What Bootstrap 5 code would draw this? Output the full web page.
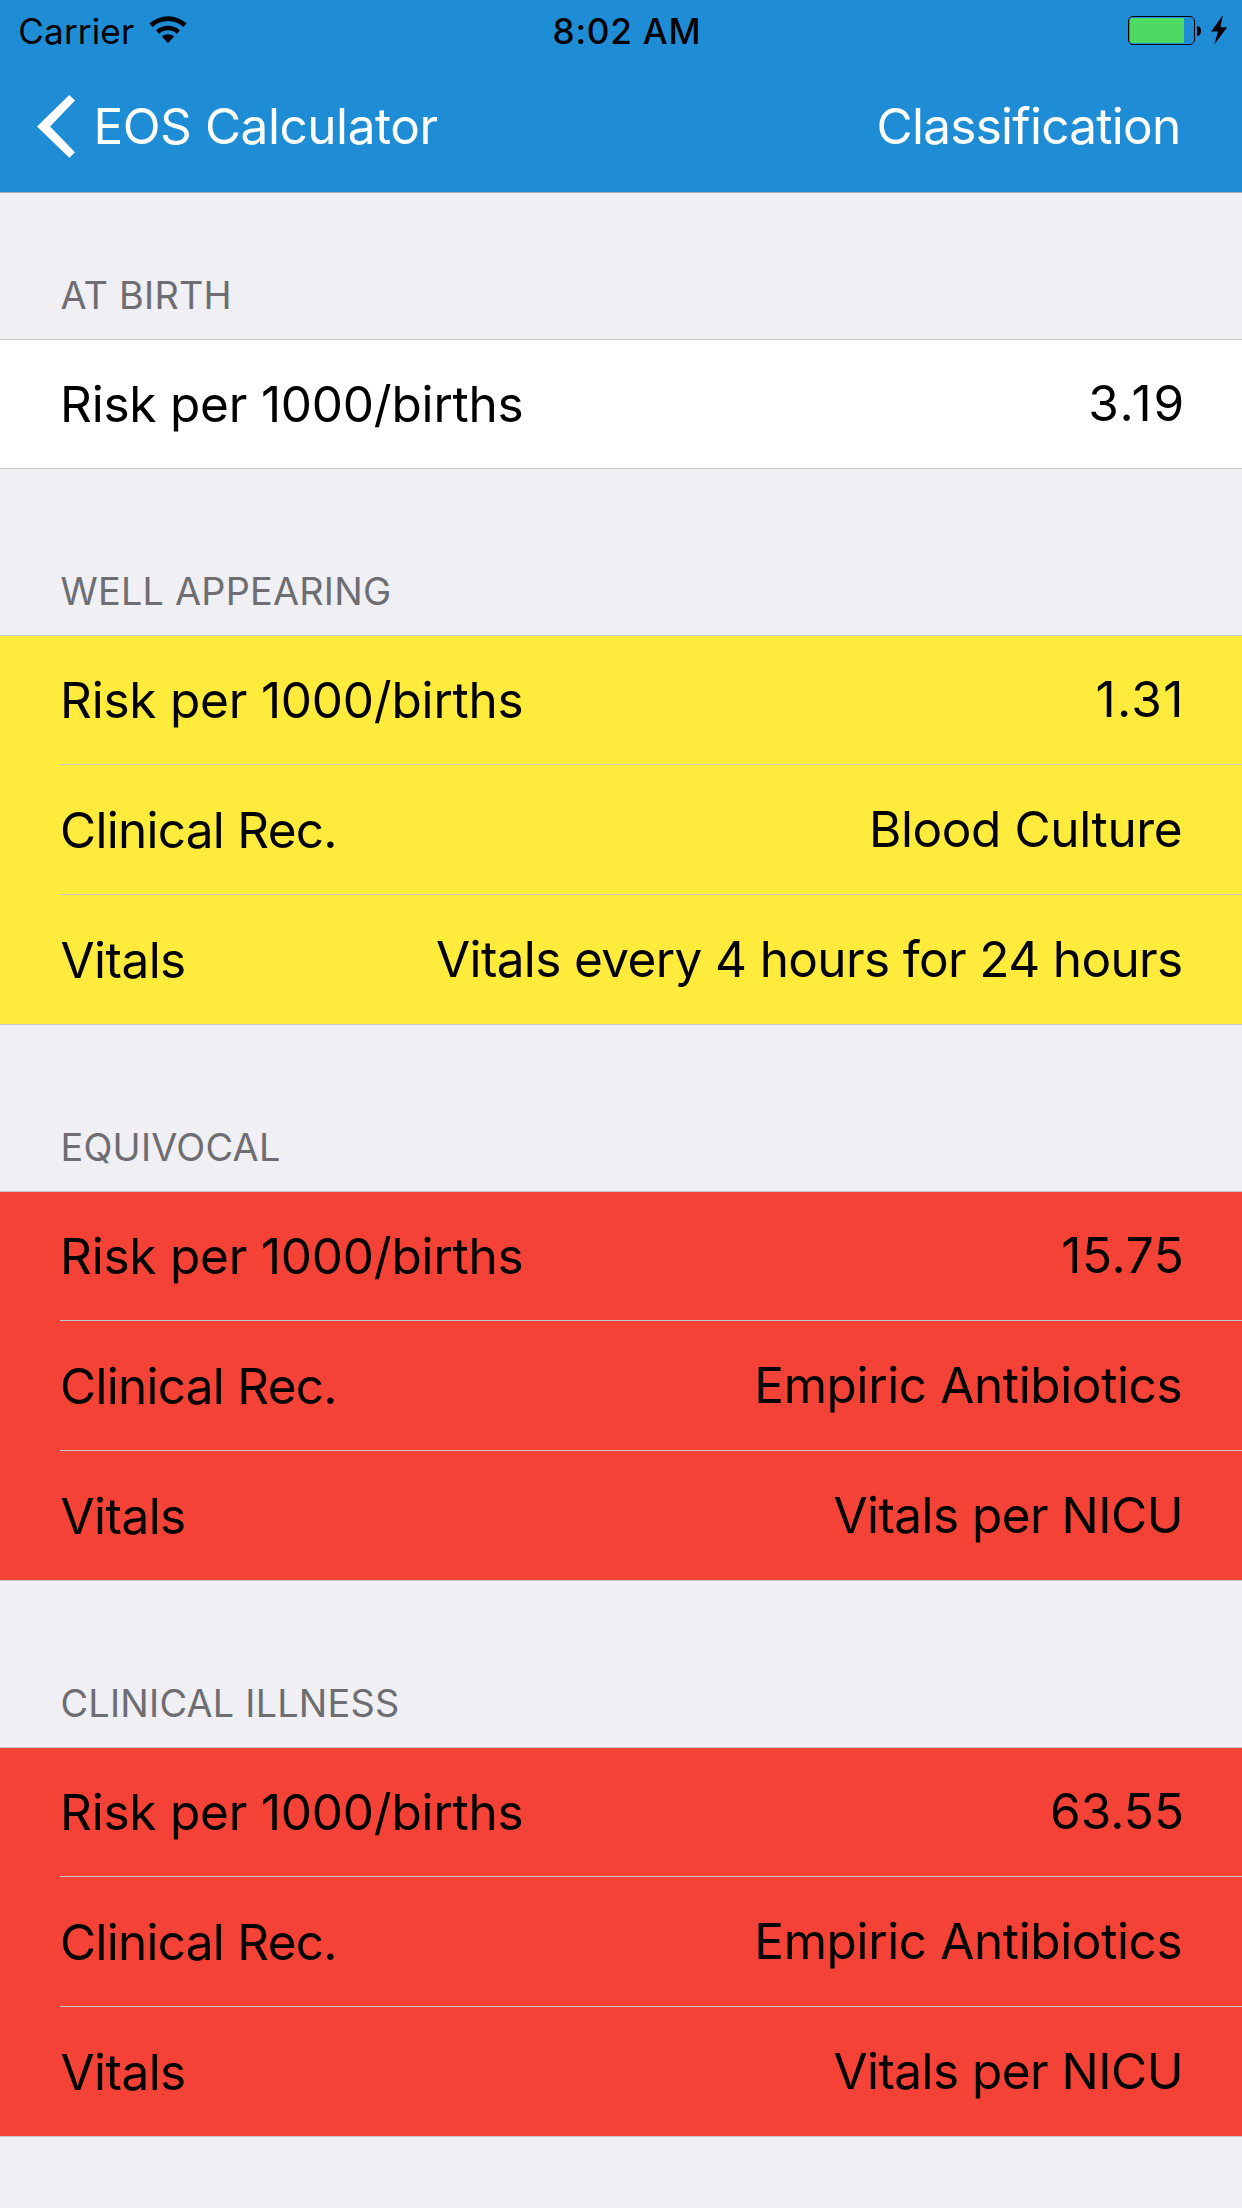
<!DOCTYPE html>
<html lang="en">
<head>
<meta charset="utf-8">
<meta name="viewport" content="width=device-width, initial-scale=1">
<title>EOS Calculator - Classification</title>
<link href="https://cdn.jsdelivr.net/npm/bootstrap@5.3.0/dist/css/bootstrap.min.css" rel="stylesheet">
<style>
  body { background: #efeff4; color: #000; font-family: Inter, "Liberation Sans", sans-serif; font-size: 49.5px; line-height: 128px; overflow: hidden; }
  .app-top { background: #1f8dd6; border-bottom: 1px solid #a9a9ae; height: 193px; }
  .status { height: 60px; font-size: 35.2px; line-height: 62px; }
  .status .side { flex: 1 1 0; }
  .carrier { padding-left: 18.3px; letter-spacing: .1px; }
  .clock { font-weight: 500; letter-spacing: .74px; padding-left: 12px; }
  .wifi { margin: 15px 0 0 14px; }
  .batt { margin: 14px 13px 0 0; }
  .titles { height: 132px; line-height: 132px; padding: 0 61.5px 0 36px; }
  .titles a { letter-spacing: -.45px; }
  .titles .page { letter-spacing: -.73px; }
  .chev { margin-right: 16.4px; }
  .group-title { height: 166px; padding: 0 0 20px 60.5px; font-size: 37.8px; line-height: 48px; letter-spacing: .23px; color: #6d6d72; }
  .group-title.first { height: 146px; }
  .group-rows { border: solid #c8c7cc; border-width: 1px 0; padding-left: 60px; }
  .entry { height: 130px; border-top: 1px solid #c8c7cc; padding-right: 58px; white-space: nowrap; }
  .entry:first-child { height: 128px; border-top: 0; }
  .entry dd { line-height: 126px; padding-bottom: 2px; }
  .entry dt { font-weight: 400; }
  .bg-well { background: #ffeb3b; }
  .bg-alert { background: #f44336; }
  .t-risk { letter-spacing: -.21px; }
  .t-rec { letter-spacing: -.73px; }
  .t-vit { letter-spacing: -.55px; padding-left: .5px; }
  .v-tight { letter-spacing: -.38px; padding-right: 1.8px; }
  .v-hours { letter-spacing: -.63px; padding-right: 1.4px; }
  .v-nicu { letter-spacing: -.54px; padding-right: 1px; }
  .v-319 { letter-spacing: 1.94px; margin-right: -2.2px; }
  .v-131 { letter-spacing: 1.39px; margin-right: -.8px; }
  .v-1575 { letter-spacing: .65px; margin-right: -.6px; }
</style>
</head>
<body>
<header class="app-top">
  <div class="status d-flex align-items-start">
    <div class="side d-flex align-items-start">
      <span class="carrier">Carrier</span>
      <svg class="wifi" width="40" height="30" viewBox="0 0 40 30">
        <path d="M1.4 8.6A27.3 27.3 0 0 1 38.6 8.6L35.2 11.9A22.5 22.5 0 0 0 4.8 11.9Z"/>
        <path d="M8 15.4A18 18 0 0 1 32 15.4L28.9 18.7A13.5 13.5 0 0 0 11.1 18.7Z"/>
        <path d="M13.8 21.6A9.3 9.3 0 0 1 26.2 21.6L20 28Z"/>
      </svg>
    </div>
    <span class="clock">8:02 AM</span>
    <div class="side d-flex justify-content-end">
      <svg class="batt" width="102" height="34" viewBox="1127 14 102 34">
        <rect x="1128.5" y="16.5" width="66" height="28" rx="4.5" fill="none" stroke="#000"/>
        <path d="M1184 18V43H1132.5Q1130 43 1130 40.5V20.5Q1130 18 1132.5 18Z" fill="#4cd964"/>
        <path d="M1197 26Q1201 26 1201 31T1197 36Z"/>
        <path d="M1222.8 15.3L1211.2 31.6H1218L1214.3 44.4L1227.2 27.3H1220.4Z"/>
      </svg>
    </div>
  </div>
  <nav class="titles d-flex justify-content-between align-items-center text-white">
    <a href="#" class="d-flex align-items-center text-white text-decoration-none">
      <svg class="chev" width="41" height="64" viewBox="36 94 41 64"><path d="M69.3 95L75 100.6L50 126.4L75 152.2L69.3 157.8L37 126.4Z" fill="#fff"/></svg>EOS Calculator</a>
    <span class="page">Classification</span>
  </nav>
</header>
<main>
  <h2 class="group-title first d-flex align-items-end m-0 fw-normal">AT BIRTH</h2>
  <dl class="group-rows bg-white m-0">
    <div class="entry d-flex justify-content-between align-items-end"><dt class="t-risk">Risk per 1000/births</dt><dd class="v-319 mb-0">3.19</dd></div>
  </dl>
  <h2 class="group-title d-flex align-items-end m-0 fw-normal">WELL APPEARING</h2>
  <dl class="group-rows bg-well m-0">
    <div class="entry d-flex justify-content-between align-items-end"><dt class="t-risk">Risk per 1000/births</dt><dd class="v-131 mb-0">1.31</dd></div>
    <div class="entry d-flex justify-content-between align-items-end"><dt class="t-rec">Clinical Rec.</dt><dd class="v-tight mb-0">Blood Culture</dd></div>
    <div class="entry d-flex justify-content-between align-items-end"><dt class="t-vit">Vitals</dt><dd class="v-hours mb-0">Vitals every 4 hours for 24 hours</dd></div>
  </dl>
  <h2 class="group-title d-flex align-items-end m-0 fw-normal">EQUIVOCAL</h2>
  <dl class="group-rows bg-alert m-0">
    <div class="entry d-flex justify-content-between align-items-end"><dt class="t-risk">Risk per 1000/births</dt><dd class="v-1575 mb-0">15.75</dd></div>
    <div class="entry d-flex justify-content-between align-items-end"><dt class="t-rec">Clinical Rec.</dt><dd class="v-tight mb-0">Empiric Antibiotics</dd></div>
    <div class="entry d-flex justify-content-between align-items-end"><dt class="t-vit">Vitals</dt><dd class="v-nicu mb-0">Vitals per NICU</dd></div>
  </dl>
  <h2 class="group-title d-flex align-items-end m-0 fw-normal">CLINICAL ILLNESS</h2>
  <dl class="group-rows bg-alert m-0">
    <div class="entry d-flex justify-content-between align-items-end"><dt class="t-risk">Risk per 1000/births</dt><dd class="mb-0">63.55</dd></div>
    <div class="entry d-flex justify-content-between align-items-end"><dt class="t-rec">Clinical Rec.</dt><dd class="v-tight mb-0">Empiric Antibiotics</dd></div>
    <div class="entry d-flex justify-content-between align-items-end"><dt class="t-vit">Vitals</dt><dd class="v-nicu mb-0">Vitals per NICU</dd></div>
  </dl>
</main>
<script src="https://cdn.jsdelivr.net/npm/bootstrap@5.3.0/dist/js/bootstrap.bundle.min.js"></script>
</body>
</html>
